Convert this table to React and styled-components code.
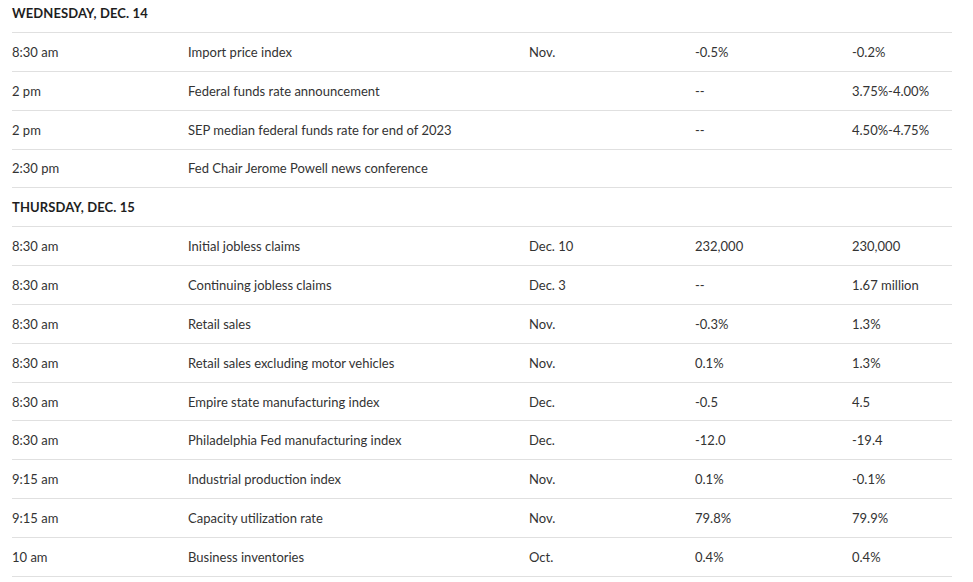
import React from "react";
import styled, { createGlobalStyle } from "styled-components";

const GlobalStyle = createGlobalStyle`
  html, body {
    margin: 0;
    padding: 0;
    background: #fff;
    overflow: hidden;
  }
`;

const Page = styled.div`
  padding: 0 21px 0 12px;
  margin-top: -5.86px;
  font-family: Lato, "Open Sans", sans-serif;
  font-size: 13px;
  color: #333;
`;

const Table = styled.div`
  display: grid;
  grid-template-columns: 176px 341px 166px 157px 1fr;
`;

const Row = styled.div`
  display: contents;
`;

const Cell = styled.div`
  height: 38.857px;
  box-sizing: border-box;
  border-bottom: 1.5px solid #e0e0e0;
  display: flex;
  align-items: center;
  white-space: nowrap;
`;

const DayCell = styled(Cell)`
  grid-column: 1 / -1;
  font-weight: 700;
  color: #1e1e1e;
  letter-spacing: 0.1px;
`;

const schedule = [
  {
    day: "WEDNESDAY, DEC. 14",
    items: [
      ["8:30 am", "Import price index", "Nov.", "-0.5%", "-0.2%"],
      ["2 pm", "Federal funds rate announcement", "", "--", "3.75%-4.00%"],
      ["2 pm", "SEP median federal funds rate for end of 2023", "", "--", "4.50%-4.75%"],
      ["2:30 pm", "Fed Chair Jerome Powell news conference", "", "", ""],
    ],
  },
  {
    day: "THURSDAY, DEC. 15",
    items: [
      ["8:30 am", "Initial jobless claims", "Dec. 10", "232,000", "230,000"],
      ["8:30 am", "Continuing jobless claims", "Dec. 3", "--", "1.67 million"],
      ["8:30 am", "Retail sales", "Nov.", "-0.3%", "1.3%"],
      ["8:30 am", "Retail sales excluding motor vehicles", "Nov.", "0.1%", "1.3%"],
      ["8:30 am", "Empire state manufacturing index", "Dec.", "-0.5", "4.5"],
      ["8:30 am", "Philadelphia Fed manufacturing index", "Dec.", "-12.0", "-19.4"],
      ["9:15 am", "Industrial production index", "Nov.", "0.1%", "-0.1%"],
      ["9:15 am", "Capacity utilization rate", "Nov.", "79.8%", "79.9%"],
      ["10 am", "Business inventories", "Oct.", "0.4%", "0.4%"],
    ],
  },
];

export default function App() {
  return (
    <>
      <GlobalStyle />
      <Page>
        <Table>
          {schedule.map((group) => (
            <React.Fragment key={group.day}>
              <DayCell>{group.day}</DayCell>
              {group.items.map((item, i) => (
                <Row key={i}>
                  {item.map((value, j) => (
                    <Cell key={j}>{value}</Cell>
                  ))}
                </Row>
              ))}
            </React.Fragment>
          ))}
        </Table>
      </Page>
    </>
  );
}
